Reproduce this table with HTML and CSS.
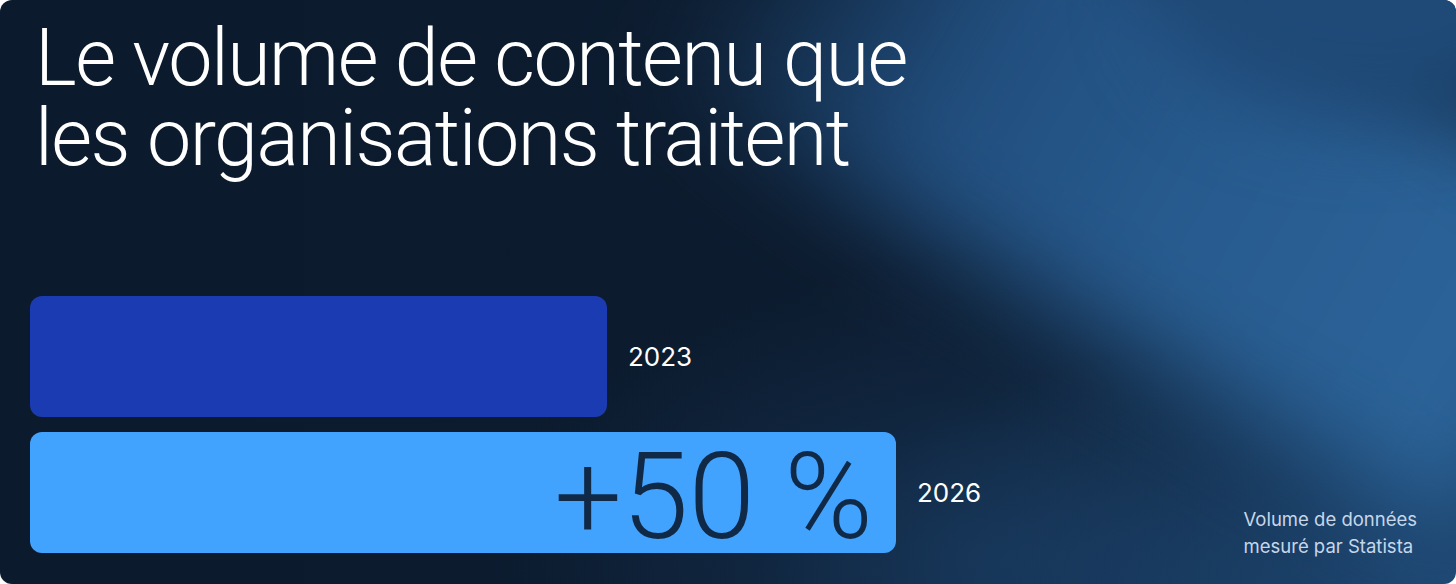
FILE: index.html
```html
<!DOCTYPE html>
<html lang="fr">
<head>
<meta charset="utf-8">
<title>Volume de contenu</title>
<link rel="stylesheet" href="styles.css">
</head>
<body>
<main class="card">
  <div class="glow"></div>
  <div class="glow-corner"></div>
  <h1 class="title">Le volume de contenu que<br>les organisations traitent</h1>
  <section class="chart">
    <div class="bars">
      <div class="row">
        <div class="bar bar-2023" style="width:577px"></div>
        <span class="year">2023</span>
      </div>
      <div class="row">
        <div class="bar bar-2026" style="width:866px"><span class="delta">+50&nbsp;%</span></div>
        <span class="year">2026</span>
      </div>
    </div>
    <p class="note">Volume de données<br>mesuré par Statista</p>
  </section>
</main>
</body>
</html>
```
FILE: styles.css
```css
html, body {
  margin: 0;
  padding: 0;
  background: #ffffff;
}
body {
  font-family: Inter, "Noto Sans", "Liberation Sans", sans-serif;
}
.card {
  position: relative;
  width: 1456px;
  height: 584px;
  box-sizing: border-box;
  border-radius: 12px;
  overflow: hidden;
  padding: 18px 0 0 30px;
  display: flex;
  flex-direction: column;
  background:
    radial-gradient(ellipse 700px 260px at 1456px 584px, rgba(30,72,116,0.95), rgba(30,72,116,0) 100%),
    radial-gradient(ellipse 520px 300px at 1000px 560px, rgba(22,52,86,0.8), rgba(22,52,86,0) 100%),
    linear-gradient(90deg, #0b1a2c 0%, #0c1b2e 55%, #0d1f34 100%);
}
.glow {
  position: absolute;
  left: 830px;
  top: -260px;
  width: 950px;
  height: 380px;
  transform: rotate(30deg);
  transform-origin: 0 0;
  background: linear-gradient(90deg, rgba(36,84,132,0) 0%, #214e7e 30%, #285c90 60%, #2c659b 100%);
  filter: blur(50px);
  pointer-events: none;
}
.glow-corner {
  position: absolute;
  right: -120px;
  top: -140px;
  width: 420px;
  height: 260px;
  border-radius: 50%;
  background: #1f4a78;
  filter: blur(40px);
  pointer-events: none;
}
.title {
  position: relative;
  margin: 0 0 0 5px;
  font-family: Roboto, Inter, "Liberation Sans", sans-serif;
  font-size: 79px;
  line-height: 80px;
  font-weight: 300;
  letter-spacing: -1.5px;
  color: #ffffff;
}
.chart {
  position: relative;
  margin-top: 118px;
  display: flex;
  justify-content: space-between;
  align-items: flex-end;
  padding-right: 39px;
}
.bars {
  display: flex;
  flex-direction: column;
  gap: 15px;
}
.row {
  display: flex;
  align-items: center;
  gap: 21px;
}
.bar {
  height: 121px;
  border-radius: 12px;
  box-sizing: border-box;
  display: flex;
  align-items: center;
  justify-content: flex-end;
}
.bar-2023 {
  background: #1b3bb3;
}
.bar-2026 {
  background: #42a3ff;
  padding-right: 23px;
}
.delta {
  font-family: Roboto, Inter, "Liberation Sans", sans-serif;
  font-size: 120px;
  font-weight: 300;
  line-height: 1;
  color: #0f2947;
  margin-top: 8px;
}
.year {
  font-size: 26px;
  font-weight: 400;
  color: #ffffff;
}
.note {
  margin: 0 0 -7px 0;
  font-size: 18.5px;
  line-height: 27px;
  color: #c6d7ea;
}
```
